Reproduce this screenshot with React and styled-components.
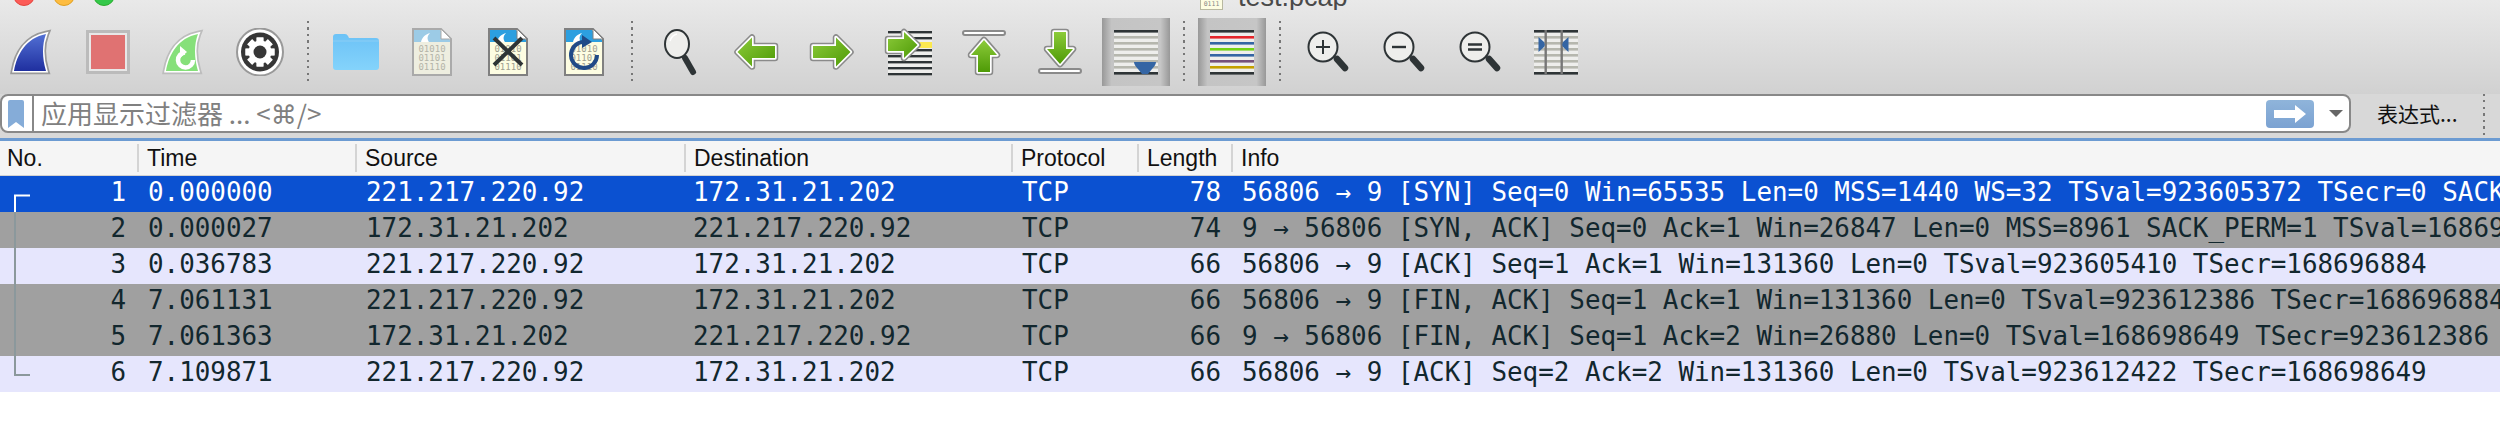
import styled, { createGlobalStyle } from "styled-components";

const GlobalStyle = createGlobalStyle`
  html, body {
    margin: 0;
    padding: 0;
    background: #fff;
    width: 2500px;
    height: 442px;
    overflow: hidden;
  }
`;

const COLUMNS = "137px 218px 329px 327px 126px 94px minmax(0, 1fr)";

// Window chrome
const Chrome = styled.div`
  background: linear-gradient(#e9e9e9, #d1d1d1);
  height: 94px;
`;

const TitleBar = styled.div`
  display: flex;
  align-items: flex-end;
  height: 10px;
  overflow: hidden;
  padding-left: 13px;
`;

const Light = styled.span`
  flex: none;
  width: 22px;
  height: 22px;
  margin-right: 18px;
  margin-bottom: 4px;
  border-radius: 50%;
  box-sizing: border-box;
  background: ${(p) => p.$color};
  border: 1px solid ${(p) => p.$edge};
`;

const TitleIcon = styled.svg`
  flex: none;
  margin-left: 1067px;
  margin-right: 15px;
`;

const Title = styled.span`
  font: 27px/26px "Liberation Sans", sans-serif;
  color: #4a4a4a;
`;

const Toolbar = styled.div`
  display: flex;
  align-items: center;
  gap: 8px;
  height: 84px;
  margin-left: -2px;
`;

const Slot = styled.div`
  flex: none;
  width: 68px;
  height: 68px;
  display: flex;
  align-items: center;
  justify-content: center;
  background: ${(p) =>
    p.$pressed
      ? "linear-gradient(90deg, #989898, #c4c4c4 14%, #c6c6c6 86%, #989898)"
      : "transparent"};
`;

const Separator = styled.div`
  flex: none;
  width: 2px;
  height: 62px;
  margin: 0 5px;
  background: repeating-linear-gradient(#777 0 2px, transparent 2px 6.5px);
`;

// Filter row
const FilterRow = styled.div`
  display: flex;
  align-items: flex-start;
  height: 44px;
  background: #d8d8d8;
`;

const FilterBox = styled.div`
  flex: none;
  width: 2351px;
  height: 39px;
  box-sizing: border-box;
  display: flex;
  align-items: center;
  background: #fff;
  border: 2px solid #888;
  border-radius: 8px;
`;

const Bookmark = styled.svg`
  flex: none;
  margin: 0 8px 0 6px;
`;

const FilterDivider = styled.div`
  flex: none;
  width: 2px;
  height: 100%;
  background: #888;
`;

const FilterText = styled.div`
  flex: 1;
  padding-left: 7px;
  font: 26px/35px "Noto Sans CJK SC", sans-serif;
  color: #808080;
  white-space: nowrap;
`;

const CommandKey = styled.span`
  font-family: "DejaVu Sans", sans-serif;
`;

const GoButton = styled.div`
  flex: none;
  width: 48px;
  height: 28px;
  display: flex;
  align-items: center;
  justify-content: center;
  border-radius: 4px;
  background: linear-gradient(#8fb4da, #7ba2d2);
`;

const Caret = styled.div`
  flex: none;
  width: 0;
  height: 0;
  margin: 0 6px 0 15px;
  border-left: 7px solid transparent;
  border-right: 7px solid transparent;
  border-top: 7px solid #666;
`;

const Expression = styled.div`
  flex: none;
  width: 106px;
  margin-left: 26px;
  font: 21px/39px "Noto Sans CJK SC", sans-serif;
  color: #111;
`;

const FilterSeparator = styled.div`
  flex: none;
  width: 2px;
  height: 44px;
  background: repeating-linear-gradient(#777 0 2px, transparent 2px 6.5px);
`;

// Packet list
const BlueLine = styled.div`
  height: 3px;
  background: #6c9bd2;
`;

const Header = styled.div`
  display: grid;
  grid-template-columns: ${COLUMNS};
  height: 35px;
  box-sizing: border-box;
  background: #f5f5f5;
  border-bottom: 1px solid #d2d2d2;
`;

const HeadCell = styled.div`
  font: 23px/28px "Liberation Sans", sans-serif;
  color: #111;
  padding-left: ${(p) => (p.$first ? "7px" : "8px")};
  box-sizing: border-box;
  border-left: ${(p) => (p.$first ? "0" : "2px solid #d4d4d4")};
  height: 28px;
  margin-top: 3px;
`;

const Rows = styled.div`
  position: relative;
`;

const Row = styled.div`
  display: grid;
  grid-template-columns: ${COLUMNS};
  height: 36px;
  overflow: hidden;
  background: ${(p) => p.$bg};
  color: ${(p) => p.$fg};
  font: 25.9px/32px "DejaVu Sans Mono", monospace;
  white-space: pre;
`;

const Cell = styled.div`
  padding-left: ${(p) => p.$left || 0}px;
  padding-right: ${(p) => p.$right || 0}px;
  text-align: ${(p) => (p.$right ? "right" : "left")};
  overflow: hidden;
`;

const Bracket = styled.svg`
  position: absolute;
  left: 0;
  top: 0;
`;

const files = [
  { band: "#9ccbe6", body: "#eeeee0", edge: "#aaa", digits: "#b4b4a8" },
  { band: "#2c9fe0", body: "#fdfde2", edge: "#808080", digits: "#a0a090" },
];

function Fin({ id, top, bottom, edge, children }) {
  const d = "M6 43 C9 26, 18 10, 38 6 C34 16, 34 30, 38 43 Z";
  return (
    <svg width="48" height="48" viewBox="0 0 48 48">
      <defs>
        <linearGradient id={id} x1="0" y1="0" x2="0" y2="1">
          <stop offset="0" stopColor={top} />
          <stop offset="1" stopColor={bottom} />
        </linearGradient>
      </defs>
      <path d={d} fill="none" stroke={edge} strokeWidth="6.6" strokeMiterlimit="8" />
      <path d={d} fill="none" stroke="#fff" strokeWidth="3.2" strokeMiterlimit="8" />
      <path d={d} fill={`url(#${id})`} />
      {children}
    </svg>
  );
}

function StopIcon() {
  return (
    <svg width="48" height="48" viewBox="0 0 48 48">
      <rect x="3.5" y="3.5" width="41" height="41" fill="#e8e8e8" stroke="#bbb" strokeWidth="3" />
      <rect x="7" y="7" width="34" height="34" fill="#e07272" />
    </svg>
  );
}

function GearIcon() {
  const teeth = [0, 45, 90, 135, 180, 225, 270, 315];
  return (
    <svg width="48" height="48" viewBox="0 0 48 48">
      <ellipse cx="24" cy="24" rx="23" ry="23.5" fill="#fff" stroke="#999" strokeWidth="2" />
      <ellipse cx="24" cy="24" rx="19" ry="19.5" fill="#363636" />
      {teeth.map((a) => (
        <rect key={a} x="20.6" y="9.5" width="6.8" height="29" fill="#fff" transform={`rotate(${a} 24 24)`} />
      ))}
      <circle cx="24" cy="24" r="11.5" fill="#fff" />
      <circle cx="24" cy="24" r="6.5" fill="#363636" />
    </svg>
  );
}

function FolderIcon() {
  return (
    <svg width="48" height="48" viewBox="0 0 48 48">
      <defs>
        <linearGradient id="folderFill" x1="0" y1="0" x2="0" y2="1">
          <stop offset="0" stopColor="#6cc2f6" />
          <stop offset="1" stopColor="#84d3fb" />
        </linearGradient>
      </defs>
      <path d="M1 9 Q1 6 4 6 L13 6 Q15 6 16 8 L17 10 L44 10 Q47 10 47 13 L47 39 Q47 42 44 42 L4 42 Q1 42 1 39 Z" fill="url(#folderFill)" />
      <path d="M1 13 L47 13" stroke="#8ccdf5" strokeWidth="1" />
    </svg>
  );
}

function FileIcon({ kind, children }) {
  const c = files[kind];
  return (
    <svg width="48" height="48" viewBox="0 0 48 48">
      <path d="M5 1 L33 1 L43 11 L43 47 L5 47 Z" fill={c.body} stroke={c.edge} strokeWidth="2" />
      <path d="M6 2 L32 2 L42 12 L42 14 L6 14 Z" fill={c.band} />
      <path d="M13 14 C14 9, 18 6, 22 5 C19 8, 19 11, 21 14 Z" fill="#fff" />
      <path d="M33 1 L33 11 L43 11 Z" fill="#fff" stroke={c.edge} strokeWidth="1" />
      {["01010", "01101", "01110"].map((t, i) => (
        <text key={t} x="24" y={24 + i * 9} textAnchor="middle" fontFamily="DejaVu Sans Mono" fontSize="9" fill={c.digits}>
          {t}
        </text>
      ))}
      {children}
    </svg>
  );
}

function Magnifier() {
  return (
    <svg width="48" height="48" viewBox="0 0 48 48">
      <ellipse cx="21" cy="16" rx="12" ry="14" fill="#eeeeec" stroke="#2e3436" strokeWidth="2" />
      <path d="M14 13 Q16 7 21 6" fill="none" stroke="#fff" strokeWidth="1.5" />
      <path d="M29 30 L37 44" stroke="#2e3436" strokeWidth="6" strokeLinecap="round" />
    </svg>
  );
}

function GreenArrow({ d, id, vertical }) {
  return (
    <>
      <defs>
        <linearGradient id={id} x1="0" y1="0" x2={vertical ? "0" : "1"} y2="1">
          <stop offset="0" stopColor="#8ccb3a" />
          <stop offset="1" stopColor="#4e9a06" />
        </linearGradient>
      </defs>
      <path d={d} fill="none" stroke="#8a8a8a" strokeWidth="6.5" strokeLinejoin="round" />
      <path d={d} fill="none" stroke="#fff" strokeWidth="3.4" strokeLinejoin="round" />
      <path d={d} fill={`url(#${id})`} />
    </>
  );
}

const ARROWS = {
  left: "M5.5 24 L20 9.5 L20 18 L43 18 L43 30 L20 30 L20 38.5 Z",
  right: "M42.5 24 L28 9.5 L28 18 L5 18 L5 30 L28 30 L28 38.5 Z",
  goto: "M33.5 17 L20 4 L20 11 L4 11 L4 23 L20 23 L20 30 Z",
  up: "M24 12 L37 27 L30 27 L30 44 L18 44 L18 27 L11 27 Z",
  down: "M24 36 L37 21 L30 21 L30 4 L18 4 L18 21 L11 21 Z",
};

function ArrowIcon({ dir }) {
  return (
    <svg width="48" height="48" viewBox="0 0 48 48">
      <GreenArrow d={ARROWS[dir]} id={`arrow-${dir}`} />
    </svg>
  );
}

function GoToIcon() {
  const ys = [4, 10, 22, 28, 34, 40, 46];
  return (
    <svg width="48" height="48" viewBox="0 0 48 48">
      <rect x="4" y="4" width="44" height="44" fill="#eeeeec" />
      {ys.map((y) => (
        <rect key={y} x="4" y={y - 1} width="44" height="2.4" fill="#2e3436" />
      ))}
      <rect x="34" y="14" width="14" height="6" fill="#fce94f" />
      <GreenArrow d={ARROWS.goto} id="arrow-goto" />
    </svg>
  );
}

function EdgeIcon({ up }) {
  return (
    <svg width="48" height="48" viewBox="0 0 48 48">
      <rect x="3" y={up ? 3 : 41} width="42" height="4" rx="2" fill="#fff" stroke="#8a8a8a" strokeWidth="2" />
      <GreenArrow d={up ? ARROWS.up : ARROWS.down} id={up ? "arrow-up" : "arrow-down"} vertical />
    </svg>
  );
}

const LINE_YS = [2, 8, 14, 20, 26, 32, 38, 44];

function ListLines({ colors }) {
  return (
    <>
      <rect x="2" y="2" width="44" height="44" fill="#eeeeec" />
      {LINE_YS.map((y, i) => (
        <rect key={y} x="2" y={y} width="44" height="2.6" fill={colors[i]} />
      ))}
    </>
  );
}

const PLAIN = ["#2e3436", "#b6b7ae", "#b6b7ae", "#b6b7ae", "#b6b7ae", "#b6b7ae", "#b6b7ae", "#2e3436"];
const COLORED = ["#2e3436", "#e5262b", "#3465a4", "#73d216", "#3465a4", "#75507b", "#c4a000", "#2e3436"];

function ScrollIcon() {
  return (
    <svg width="48" height="48" viewBox="0 0 48 48">
      <ListLines colors={PLAIN} />
      <path d="M22 34 L44 34 Q44 37 40 41 L36 46 L30 46 L26 41 Q22 37 22 34 Z" fill="#3465a4" />
    </svg>
  );
}

function ColorIcon() {
  return (
    <svg width="48" height="48" viewBox="0 0 48 48">
      <ListLines colors={COLORED} />
    </svg>
  );
}

function ZoomIcon({ mark }) {
  return (
    <svg width="48" height="48" viewBox="0 0 48 48">
      <circle cx="19" cy="19" r="14.5" fill="#eeeeec" stroke="#2e3436" strokeWidth="2" />
      <path d="M33 31 L41 40" stroke="#2e3436" strokeWidth="6.5" strokeLinecap="round" />
      {mark === "in" && <path d="M19 12 V26 M12 19 H26" stroke="#2e3436" strokeWidth="2" />}
      {mark === "out" && <path d="M12 19 H26" stroke="#2e3436" strokeWidth="2.4" />}
      {mark === "fit" && <path d="M12 16.5 H26 M12 21.5 H26" stroke="#2e3436" strokeWidth="2.4" />}
    </svg>
  );
}

function ResizeIcon() {
  return (
    <svg width="48" height="48" viewBox="0 0 48 48">
      <ListLines colors={PLAIN} />
      <rect x="12.5" y="2" width="2.4" height="44" fill="#777" />
      <rect x="28.5" y="2" width="2.4" height="44" fill="#777" />
      <path d="M6.5 9 L12 14 Q13.5 16.5 12 19 L6.5 24 Z" fill="#3465a4" />
      <path d="M36.5 9 L31 14 Q29.5 16.5 31 19 L36.5 24 Z" fill="#3465a4" />
    </svg>
  );
}

const packets = [
  ["1", "0.000000", "221.217.220.92", "172.31.21.202", "TCP", "78", "56806 → 9 [SYN] Seq=0 Win=65535 Len=0 MSS=1440 WS=32 TSval=923605372 TSecr=0 SACK_PERM=1"],
  ["2", "0.000027", "172.31.21.202", "221.217.220.92", "TCP", "74", "9 → 56806 [SYN, ACK] Seq=0 Ack=1 Win=26847 Len=0 MSS=8961 SACK_PERM=1 TSval=168696884 TSecr=923605372"],
  ["3", "0.036783", "221.217.220.92", "172.31.21.202", "TCP", "66", "56806 → 9 [ACK] Seq=1 Ack=1 Win=131360 Len=0 TSval=923605410 TSecr=168696884"],
  ["4", "7.061131", "221.217.220.92", "172.31.21.202", "TCP", "66", "56806 → 9 [FIN, ACK] Seq=1 Ack=1 Win=131360 Len=0 TSval=923612386 TSecr=168696884"],
  ["5", "7.061363", "172.31.21.202", "221.217.220.92", "TCP", "66", "9 → 56806 [FIN, ACK] Seq=1 Ack=2 Win=26880 Len=0 TSval=168698649 TSecr=923612386"],
  ["6", "7.109871", "221.217.220.92", "172.31.21.202", "TCP", "66", "56806 → 9 [ACK] Seq=2 Ack=2 Win=131360 Len=0 TSval=923612422 TSecr=168698649"],
];

const rowColors = [
  { bg: "#0b51d1", fg: "#fff" },
  { bg: "#a0a0a0", fg: "#12272e" },
  { bg: "#e6e6fd", fg: "#12272e" },
  { bg: "#a0a0a0", fg: "#12272e" },
  { bg: "#a0a0a0", fg: "#12272e" },
  { bg: "#e6e6fd", fg: "#12272e" },
];

const headers = ["No.", "Time", "Source", "Destination", "Protocol", "Length", "Info"];

function App() {
  return (
    <>
      <GlobalStyle />
      <Chrome>
        <TitleBar>
          <Light $color="#fc5b57" $edge="#e2463f" />
          <Light $color="#fdbc40" $edge="#dfa023" />
          <Light $color="#34c84a" $edge="#2dac2f" />
          <TitleIcon width="23" height="22" viewBox="0 0 23 22">
            <rect x="0.5" y="0.5" width="22" height="21" fill="#fdfde2" stroke="#b8b8a0" />
            <text x="11.5" y="18" textAnchor="middle" fontFamily="DejaVu Sans Mono" fontSize="6.5" fill="#888">0111</text>
          </TitleIcon>
          <Title>test.pcap</Title>
        </TitleBar>
        <Toolbar>
          <Slot><Fin id="finBlue" top="#5270d4" bottom="#1f2f9f" edge="#999" /></Slot>
          <Slot><StopIcon /></Slot>
          <Slot>
            <Fin id="finGreen" top="#86e07a" bottom="#86e07a" edge="#bdbdbd">
              <path d="M33 32 A7.5 7.5 0 1 1 25 24.5" fill="none" stroke="#fff" strokeWidth="4.5" />
              <path d="M20 18 L27 24 L20 30 Z" fill="#fff" />
            </Fin>
          </Slot>
          <Slot><GearIcon /></Slot>
          <Separator />
          <Slot><FolderIcon /></Slot>
          <Slot><FileIcon kind={0} /></Slot>
          <Slot>
            <FileIcon kind={1}>
              <path d="M10 10 L38 37 M38 10 L10 37" stroke="#2e3436" strokeWidth="4" />
            </FileIcon>
          </Slot>
          <Slot>
            <FileIcon kind={1}>
              <path d="M37 27 A13 13 0 1 1 23 14" fill="none" stroke="#204a87" strokeWidth="4" />
              <path d="M22 7 L32 14 L22 20 Z" fill="#204a87" />
            </FileIcon>
          </Slot>
          <Separator />
          <Slot><Magnifier /></Slot>
          <Slot><ArrowIcon dir="left" /></Slot>
          <Slot><ArrowIcon dir="right" /></Slot>
          <Slot><GoToIcon /></Slot>
          <Slot><EdgeIcon up /></Slot>
          <Slot><EdgeIcon /></Slot>
          <Slot $pressed><ScrollIcon /></Slot>
          <Separator />
          <Slot $pressed><ColorIcon /></Slot>
          <Separator />
          <Slot><ZoomIcon mark="in" /></Slot>
          <Slot><ZoomIcon mark="out" /></Slot>
          <Slot><ZoomIcon mark="fit" /></Slot>
          <Slot><ResizeIcon /></Slot>
        </Toolbar>
      </Chrome>
      <FilterRow>
        <FilterBox>
          <Bookmark width="16" height="28" viewBox="0 0 16 28">
            <path d="M2 0 H14 Q16 0 16 2 V28 L8 22 L0 28 V2 Q0 0 2 0 Z" fill="#85acd8" />
          </Bookmark>
          <FilterDivider />
          <FilterText>应用显示过滤器 ... &lt;<CommandKey>⌘</CommandKey>/&gt;</FilterText>
          <GoButton>
            <svg width="34" height="18" viewBox="0 0 34 18">
              <path d="M1 5 H22 V0 L33 9 L22 18 V13 H1 Z" fill="#fff" />
            </svg>
          </GoButton>
          <Caret />
        </FilterBox>
        <Expression>表达式...</Expression>
        <FilterSeparator />
      </FilterRow>
      <BlueLine />
      <Header>
        {headers.map((h, i) => (
          <HeadCell key={h} $first={i === 0}>{h}</HeadCell>
        ))}
      </Header>
      <Rows>
        {packets.map((p, i) => (
          <Row key={p[0]} $bg={rowColors[i].bg} $fg={rowColors[i].fg}>
            <Cell $right={11}>{p[0]}</Cell>
            <Cell $left={11}>{p[1]}</Cell>
            <Cell $left={11}>{p[2]}</Cell>
            <Cell $left={9}>{p[3]}</Cell>
            <Cell $left={11}>{p[4]}</Cell>
            <Cell $right={10}>{p[5]}</Cell>
            <Cell $left={11}>{p[6]}</Cell>
          </Row>
        ))}
        <Bracket width="32" height="216" viewBox="0 0 32 216">
          <path d="M30 19.5 H15 V36" fill="none" stroke="#fff" strokeWidth="2" />
          <path d="M15 36 V199 H30" fill="none" stroke="#8b989c" strokeWidth="2" />
        </Bracket>
      </Rows>
    </>
  );
}

export default App;
